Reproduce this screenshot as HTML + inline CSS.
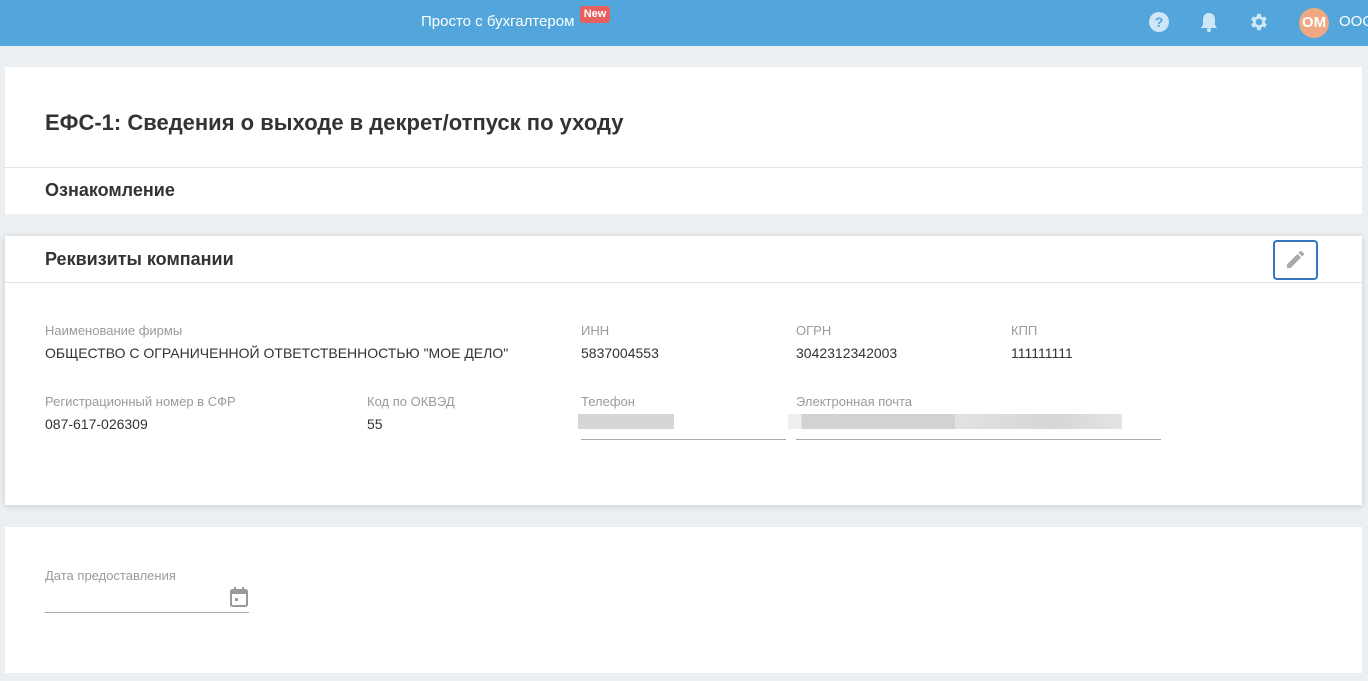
<!DOCTYPE html>
<html><head><meta charset="utf-8"><style>
*{box-sizing:border-box;margin:0;padding:0}
body{width:1368px;height:681px;overflow:hidden;background:#eceff2;font-family:"Liberation Sans",Arial,sans-serif;color:#333;position:relative}
.hdr{position:absolute;left:0;top:0;width:1368px;height:46px;background:#52a6dc}
.abs{position:absolute}
.card{position:absolute;left:5px;width:1357px;background:#fff}
.lbl{position:absolute;font-size:13px;color:#9a9a9a}
.val{position:absolute;font-size:14px;color:#333}
.line{position:absolute;height:1px;background:#aaa}
</style></head><body>
<div class="hdr">
 <div class="abs" style="left:421px;top:13px;font-size:15px;color:#fff">Просто с бухгалтером</div>
 <div class="abs" style="left:580px;top:6px;width:30px;height:17px;background:#e85f5f;border-radius:3px;color:#fff;font-size:11px;font-weight:bold;text-align:center;line-height:16px">New</div>
 <svg class="abs" style="left:1148px;top:11px" width="22" height="22" viewBox="0 0 22 22"><circle cx="11" cy="11" r="10" fill="#cfe6f7"/><text x="11" y="16" font-size="14" font-weight="bold" text-anchor="middle" fill="#52a6dc" font-family="Liberation Sans">?</text></svg>
 <svg class="abs" style="left:1199px;top:11px" width="20" height="22" viewBox="0 0 20 22"><path d="M10 2c-4 0-6 3-6 7v5l-2 3h16l-2-3V9c0-4-2-7-6-7z" fill="#cfe6f7"/><circle cx="10" cy="19" r="2" fill="#cfe6f7"/></svg>
 <svg class="abs" style="left:1248px;top:11px" width="22" height="22" viewBox="0 0 24 24"><path fill="#cfe6f7" d="M19.4 13a7.5 7.5 0 000-2l2.1-1.6-2-3.5-2.5 1a7.3 7.3 0 00-1.7-1L15 3h-4l-.4 2.9a7.3 7.3 0 00-1.7 1l-2.5-1-2 3.5L6.5 11a7.5 7.5 0 000 2l-2.1 1.6 2 3.5 2.5-1a7.3 7.3 0 001.7 1L11 21h4l.4-2.9a7.3 7.3 0 001.7-1l2.5 1 2-3.5zM13 15.5a3.5 3.5 0 110-7 3.5 3.5 0 010 7z" transform="translate(-1 0)"/></svg>
 <div class="abs" style="left:1299px;top:8px;width:30px;height:30px;border-radius:50%;background:#f0a882;color:#fff;font-weight:bold;font-size:15px;text-align:center;line-height:30px">ОМ</div>
 <div class="abs" style="left:1339px;top:13px;font-size:15px;color:#fff">ООО</div>
</div>

<div class="card" style="top:67px;height:147px">
 <div class="abs" style="left:40px;top:43px;font-size:22px;font-weight:bold;color:#333">ЕФС-1: Сведения о выходе в декрет/отпуск по уходу</div>
 <div class="abs" style="left:0;top:100px;width:100%;height:1px;background:#e3e3e3"></div>
 <div class="abs" style="left:40px;top:113px;font-size:18px;font-weight:bold;color:#333">Ознакомление</div>
</div>

<div class="card" style="top:236px;height:269px;box-shadow:0 1px 6px rgba(0,0,0,.15)">
 <div class="abs" style="left:40px;top:13px;font-size:18px;font-weight:bold;color:#333">Реквизиты компании</div>
 <div class="abs" style="left:1268px;top:4px;width:45px;height:40px;border:2px solid #3476c0;border-radius:4px"></div>
 <svg class="abs" style="left:1279px;top:12px" width="23" height="23" viewBox="0 0 24 24"><path fill="#aaa" d="M3 17.25V21h3.75L17.8 9.94l-3.75-3.75zM20.7 7.04a1 1 0 000-1.41l-2.34-2.34a1 1 0 00-1.41 0l-1.83 1.83 3.75 3.75z"/></svg>
 <div class="abs" style="left:0;top:46px;width:100%;height:1px;background:#e3e3e3"></div>
 <div class="lbl" style="left:40px;top:87px">Наименование фирмы</div>
 <div class="val" style="left:40px;top:109px">ОБЩЕСТВО С ОГРАНИЧЕННОЙ ОТВЕТСТВЕННОСТЬЮ "МОЕ ДЕЛО"</div>
 <div class="lbl" style="left:576px;top:87px">ИНН</div>
 <div class="val" style="left:576px;top:109px">5837004553</div>
 <div class="lbl" style="left:791px;top:87px">ОГРН</div>
 <div class="val" style="left:791px;top:109px">3042312342003</div>
 <div class="lbl" style="left:1006px;top:87px">КПП</div>
 <div class="val" style="left:1006px;top:109px">111111111</div>
 <div class="lbl" style="left:40px;top:158px">Регистрационный номер в СФР</div>
 <div class="val" style="left:40px;top:180px">087-617-026309</div>
 <div class="lbl" style="left:362px;top:158px">Код по ОКВЭД</div>
 <div class="val" style="left:362px;top:180px">55</div>
 <div class="lbl" style="left:576px;top:158px">Телефон</div>
 <div class="abs" style="left:573px;top:178px;width:96px;height:15px;background:#d6d6d6"></div>
 <div class="line" style="left:576px;top:203px;width:205px"></div>
 <div class="lbl" style="left:791px;top:158px">Электронная почта</div>
 <div class="abs" style="left:783px;top:178px;width:334px;height:15px;background:linear-gradient(90deg,#eee 0,#eee 4%,#d2d2d2 4%,#d2d2d2 50%,#e2e2e2 50%,#d6d6d6 80%,#e4e4e4 100%)"></div>
 <div class="line" style="left:791px;top:203px;width:365px"></div>
</div>

<div class="card" style="top:527px;height:146px">
 <div class="lbl" style="left:40px;top:41px">Дата предоставления</div>
 <svg class="abs" style="left:224px;top:59px" width="20" height="22" viewBox="0 0 20 22"><rect x="2" y="4" width="16" height="16" rx="1.5" fill="none" stroke="#999" stroke-width="2"/><rect x="2" y="4" width="16" height="4" fill="#999"/><rect x="5" y="1" width="2" height="4" fill="#999"/><rect x="13" y="1" width="2" height="4" fill="#999"/><rect x="6" y="12" width="3" height="3" fill="#999"/></svg>
 <div class="line" style="left:40px;top:85px;width:204px"></div>
</div>
</body></html>
